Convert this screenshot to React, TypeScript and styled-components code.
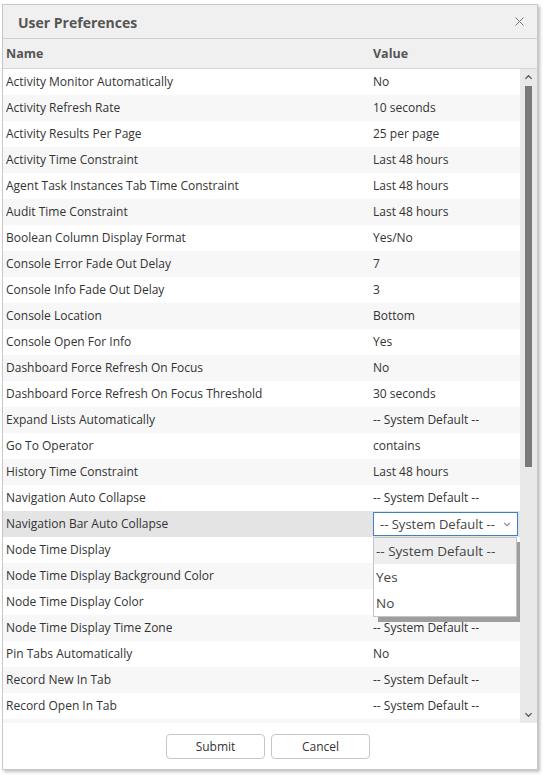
import {FunctionComponent} from 'react'
import styled, {createGlobalStyle} from 'styled-components'

const GlobalStyle = createGlobalStyle`
    html, body {
        margin: 0;
        padding: 0;
        background: #ffffff;
    }

    body {
        font-family: 'Open Sans', 'Noto Sans', sans-serif;
        color: #333333;
    }
`

const Page = styled.div`
    padding: 4px 5px 5px 2px;
    width: 543px;
    height: 775px;
    box-sizing: border-box;
`

const Dialog = styled.div`
    display: flex;
    flex-direction: column;
    height: 766px;
    border: 1px solid #c8c8c8;
    background: #ffffff;
    box-shadow: 2px 2px 3px rgba(0, 0, 0, 0.25);
    box-sizing: border-box;
`

const TitleBar = styled.div`
    display: flex;
    align-items: center;
    justify-content: space-between;
    height: 33px;
    padding: 0 12px 0 15px;
    background: #f0f0f0;
    border-bottom: 1px solid #cfcfcf;
    flex-shrink: 0;
`

const Title = styled.h2`
    margin: 0;
    padding-top: 1px;
    font-size: 14px;
    font-weight: 700;
    color: #555555;
`

const CloseButton = styled.button`
    background: none;
    border: none;
    padding: 0;
    width: 12px;
    height: 12px;
    display: flex;
    align-items: center;
    justify-content: center;
    cursor: pointer;
`

const HeaderRow = styled.div`
    display: grid;
    grid-template-columns: 367px 1fr;
    height: 29px;
    align-items: center;
    background: #f0f0f0;
    border-bottom: 1px solid #d6d6d6;
    flex-shrink: 0;
`

const HeaderCell = styled.div`
    padding-left: 3px;
    padding-bottom: 1px;
    font-size: 12.5px;
    font-weight: 700;
    color: #555555;
`

const Body = styled.div`
    display: flex;
    height: 654px;
    flex-shrink: 0;
`

const RowList = styled.div`
    flex: 1;
    overflow: hidden;
`

const Row = styled.div<{ $shade: 'white' | 'grey' | 'active' }>`
    display: grid;
    grid-template-columns: 367px 1fr;
    height: 26px;
    align-items: center;
    font-size: 12px;
    color: #333333;
    background: ${({$shade}) => $shade === 'active' ? '#e4e4e4' : $shade === 'grey' ? '#f7f7f7' : '#ffffff'};
`

const Cell = styled.div`
    padding-left: 3px;
    padding-bottom: 1px;
    white-space: nowrap;
    position: relative;
`

const SelectBox = styled.div`
    display: flex;
    align-items: center;
    justify-content: space-between;
    width: 145px;
    height: 24px;
    margin-top: 1px;
    box-sizing: border-box;
    border: 1px solid #3f7fc4;
    background: #ffffff;
    padding: 0 6px 0 6px;
    font-size: 13px;
    color: #444444;
`

const DropList = styled.ul`
    position: absolute;
    top: 26px;
    left: 3px;
    width: 144px;
    margin: 0;
    padding: 0;
    list-style: none;
    background: #ffffff;
    border: 1px solid #c4c4c4;
    box-sizing: border-box;
    box-shadow: 5px 5px 0 #9e9e9e;
    z-index: 2;
`

const DropItem = styled.li<{ $selected?: boolean }>`
    height: 26px;
    display: flex;
    align-items: center;
    padding-left: 2px;
    font-size: 13.5px;
    color: #444444;
    background: ${({$selected}) => $selected ? '#eeeeee' : '#ffffff'};
`

const ScrollTrack = styled.div`
    width: 17px;
    display: flex;
    flex-direction: column;
    align-items: center;
    background: #e9e9e9;
    flex-shrink: 0;
`

const ScrollArrow = styled.div`
    height: 17px;
    display: flex;
    align-items: center;
    justify-content: center;
`

const ScrollThumb = styled.div`
    width: 7px;
    height: 381px;
    background: #7a7a7a;
`

const ScrollRest = styled.div`
    flex: 1;
`

const Footer = styled.div`
    flex: 1;
    display: flex;
    justify-content: center;
    align-items: flex-start;
    gap: 6px;
    padding-top: 11px;
    padding-right: 4px;
`

const Button = styled.button`
    width: 99px;
    height: 25px;
    background: #ffffff;
    border: 1px solid #c6c6c6;
    border-radius: 4px;
    font-family: 'Open Sans', 'Noto Sans', sans-serif;
    font-size: 12px;
    color: #333333;
    cursor: pointer;
`

const Chevron: FunctionComponent<{ up?: boolean; size?: number; color?: string }> = ({up, size = 9, color = '#555'}) => (
    <svg width={size} height={size} viewBox="0 0 10 10">
        <path d={up ? 'M1.5 6.5 L5 3 L8.5 6.5' : 'M1.5 3.5 L5 7 L8.5 3.5'} fill="none" stroke={color}
              strokeWidth="1.4"/>
    </svg>
)

// values under the open dropdown, and the row cut off at the bottom, are not visible
const preferences: [string, string][] = [
    ['Activity Monitor Automatically', 'No'],
    ['Activity Refresh Rate', '10 seconds'],
    ['Activity Results Per Page', '25 per page'],
    ['Activity Time Constraint', 'Last 48 hours'],
    ['Agent Task Instances Tab Time Constraint', 'Last 48 hours'],
    ['Audit Time Constraint', 'Last 48 hours'],
    ['Boolean Column Display Format', 'Yes/No'],
    ['Console Error Fade Out Delay', '7'],
    ['Console Info Fade Out Delay', '3'],
    ['Console Location', 'Bottom'],
    ['Console Open For Info', 'Yes'],
    ['Dashboard Force Refresh On Focus', 'No'],
    ['Dashboard Force Refresh On Focus Threshold', '30 seconds'],
    ['Expand Lists Automatically', '-- System Default --'],
    ['Go To Operator', 'contains'],
    ['History Time Constraint', 'Last 48 hours'],
    ['Navigation Auto Collapse', '-- System Default --'],
    ['Navigation Bar Auto Collapse', '-- System Default --'],
    ['Node Time Display', ''],
    ['Node Time Display Background Color', ''],
    ['Node Time Display Color', ''],
    ['Node Time Display Time Zone', '-- System Default --'],
    ['Pin Tabs Automatically', 'No'],
    ['Record New In Tab', '-- System Default --'],
    ['Record Open In Tab', '-- System Default --'],
    ['', ''],
]

const editing = 'Navigation Bar Auto Collapse'

const App: FunctionComponent = () => {
    return (
        <Page>
            <GlobalStyle/>
            <Dialog>
                <TitleBar>
                    <Title>User Preferences</Title>
                    <CloseButton aria-label="Close">
                        <svg width="9" height="9" viewBox="0 0 9 9">
                            <path d="M0.5 0.5 L8.5 8.5 M8.5 0.5 L0.5 8.5" stroke="#777" strokeWidth="1"/>
                        </svg>
                    </CloseButton>
                </TitleBar>
                <HeaderRow>
                    <HeaderCell>Name</HeaderCell>
                    <HeaderCell>Value</HeaderCell>
                </HeaderRow>
                <Body>
                    <RowList>
                        {preferences.map(([name, value], i) => {
                            const isEditing = name === editing
                            const shade = isEditing ? 'active' : i % 2 === 1 ? 'grey' : 'white'
                            return (
                                <Row key={i} $shade={shade}>
                                    <Cell>{name}</Cell>
                                    <Cell>
                                        {isEditing ? (
                                            <>
                                                <SelectBox>
                                                    <span>{value}</span>
                                                    <Chevron size={8} color="#888"/>
                                                </SelectBox>
                                                <DropList>
                                                    <DropItem $selected>-- System Default --</DropItem>
                                                    <DropItem>Yes</DropItem>
                                                    <DropItem>No</DropItem>
                                                </DropList>
                                            </>
                                        ) : value}
                                    </Cell>
                                </Row>
                            )
                        })}
                    </RowList>
                    <ScrollTrack>
                        <ScrollArrow><Chevron up/></ScrollArrow>
                        <ScrollThumb/>
                        <ScrollRest/>
                        <ScrollArrow><Chevron/></ScrollArrow>
                    </ScrollTrack>
                </Body>
                <Footer>
                    <Button>Submit</Button>
                    <Button>Cancel</Button>
                </Footer>
            </Dialog>
        </Page>
    )
}

export default App
